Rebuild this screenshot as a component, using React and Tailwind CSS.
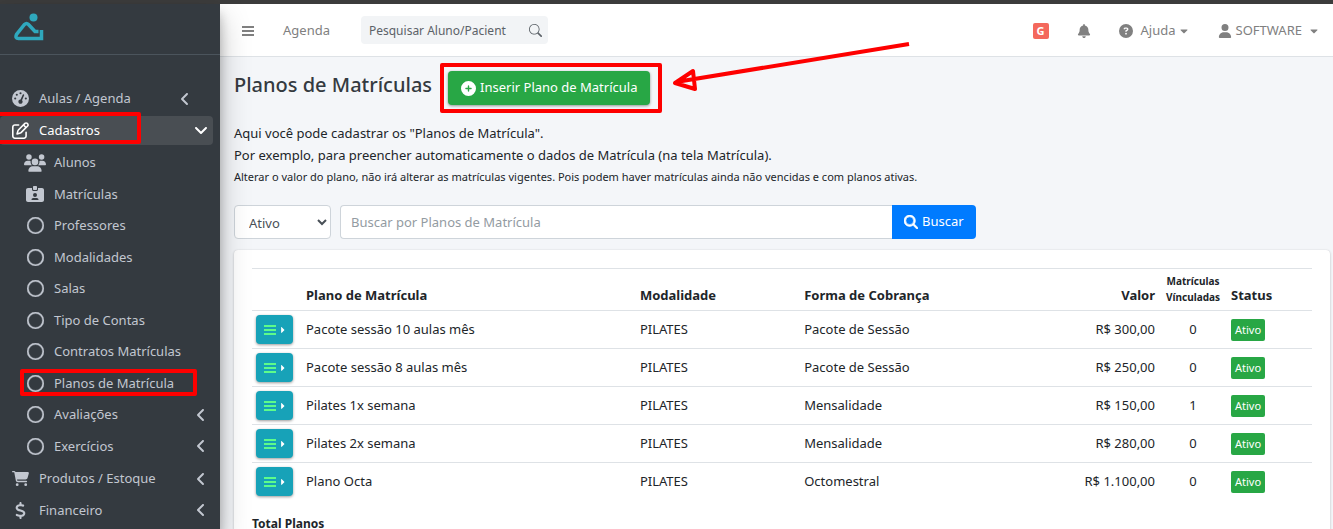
import { FaAngleDown, FaAngleLeft, FaCartShopping, FaDollarSign, FaGaugeHigh, FaIdCardClip, FaUsers, FaBell, FaUser, FaCircleQuestion, FaCirclePlus, FaMagnifyingGlass, FaRegCircle, FaRegPenToSquare } from 'react-icons/fa6';
import { FaCaretDown, FaCaretRight } from 'react-icons/fa';
import { BsSearch } from 'react-icons/bs';

const plans = [
  { name: 'Pacote sessão 10 aulas mês', type: 'PILATES', billing: 'Pacote de Sessão', price: 'R$ 300,00', enrolled: 0 },
  { name: 'Pacote sessão 8 aulas mês', type: 'PILATES', billing: 'Pacote de Sessão', price: 'R$ 250,00', enrolled: 0 },
  { name: 'Pilates 1x semana', type: 'PILATES', billing: 'Mensalidade', price: 'R$ 150,00', enrolled: 1 },
  { name: 'Pilates 2x semana', type: 'PILATES', billing: 'Mensalidade', price: 'R$ 280,00', enrolled: 0 },
  { name: 'Plano Octa', type: 'PILATES', billing: 'Octomestral', price: 'R$ 1.100,00', enrolled: 0 },
];

const children = [
  { label: 'Alunos', icon: FaUsers },
  { label: 'Matrículas', icon: FaIdCardClip },
  { label: 'Professores' },
  { label: 'Modalidades' },
  { label: 'Salas' },
  { label: 'Tipo de Contas' },
  { label: 'Contratos Matrículas' },
  { label: 'Planos de Matrícula', marked: true },
  { label: 'Avaliações', more: true },
  { label: 'Exercícios', more: true },
];

function Logo() {
  return (
    <svg viewBox="0 0 30 28" className="w-[30px] h-7" fill="none" aria-hidden="true">
      <circle cx="19.5" cy="4.500" r="4" fill="#2fa8bd" />
      <path d="M24.500 18.500 H21 L14.500 11.500 Q12.500 9.500 10.500 11.500 L2.500 21.500 Q0.800 25.500 4.500 25.500 H27.500 V17" stroke="#2fa8bd" strokeWidth="3.500" />
    </svg>
  );
}

function Bars({ className }) {
  return (
    <svg viewBox="0 0 12 12" className={className} fill="currentColor" aria-hidden="true">
      <path d="M0 1h12v2H0zM0 5h12v2H0zM0 9h12v2H0z" />
    </svg>
  );
}

function Mark({ className }) {
  return <span className={`absolute border-4 border-[#fe0000] rounded-xs pointer-events-none ${className}`} />;
}

function NavItem({ label, icon: Icon, more, open, near, marked }) {
  return (
    <li>
      <a href="#" className={`relative flex items-center rounded pl-2 pr-1 py-[5px] mb-0.5 ${open ? 'bg-[#494e53] text-white' : ''}`}>
        <span className="w-6 flex justify-center mr-[7px]">
          <Icon className="size-[17px]" />
        </span>
        {label}
        {more && <FaAngleLeft className={`size-4 ml-auto ${near ? 'mr-4' : ''}`} />}
        {open && <FaAngleDown className="size-4 ml-auto" />}
        {marked && <Mark className="-left-1 right-[72px] -top-1 bottom-px" />}
      </a>
    </li>
  );
}

function SubItem({ label, icon: Icon = FaRegCircle, more, marked }) {
  return (
    <li>
      <a href="#" className="relative flex items-center pl-2 pr-1 py-[5px] mb-0.5">
        <span className="w-6 flex justify-center ml-[15px] mr-[7px]">
          <Icon className={Icon === FaUsers ? 'w-[22px] h-[18px]' : Icon === FaRegCircle ? 'size-[17px] stroke-[10]' : 'size-[18px]'} />
        </span>
        {label}
        {more && <FaAngleLeft className="size-4 ml-auto" />}
        {marked && <Mark className="left-5 right-4 top-0 bottom-0.5" />}
      </a>
    </li>
  );
}

function Sidebar() {
  return (
    <aside className="relative z-10 w-[220px] shrink-0 bg-[#343a40] text-[13px] leading-normal text-[#c2c7d0] shadow-[0_14px_28px_rgba(0,0,0,0.25),0_10px_10px_rgba(0,0,0,0.22)]">
      <a href="#" aria-label="Início" className="flex items-center h-[51px] pl-[14px] pb-1 border-b border-[#4b545c]">
        <Logo />
      </a>
      <nav className="mt-[29px] pr-[7px]">
        <ul>
          <NavItem label="Aulas / Agenda" icon={FaGaugeHigh} more near />
          <NavItem label="Cadastros" icon={FaRegPenToSquare} open marked />
          <li>
            <ul className="py-px">
              {children.map((c) => <SubItem key={c.label} {...c} />)}
            </ul>
          </li>
          <NavItem label="Produtos / Estoque" icon={FaCartShopping} more />
          <NavItem label="Financeiro" icon={FaDollarSign} more />
        </ul>
      </nav>
    </aside>
  );
}

function Topbar() {
  return (
    <header className="flex items-center h-[53px] shrink-0 bg-white border-b border-[#dee2e6] pl-[22px] pr-[13px] pt-0.5 text-[13px] text-[#808080]">
      <button type="button" aria-label="Menu"><Bars className="size-3" /></button>
      <a href="#" className="ml-[29px]">Agenda</a>
      <form className="ml-[31px] mb-0.5 flex items-center w-[187px] h-7 rounded bg-[#f2f4f6] text-[#5c6268]">
        <input aria-label="Pesquisar Aluno/Paciente" placeholder="Pesquisar Aluno/Pacient" className="min-w-0 flex-1 pl-2 pt-0.5 text-xs outline-none placeholder:text-[#5c6268]" />
        <button type="button" aria-label="Pesquisar" className="px-1.5"><BsSearch className="size-[13px]" /></button>
      </form>
      <div className="ml-auto flex items-center">
        <a href="#" aria-label="G" className="flex items-center justify-center size-4 rounded-xs bg-[#f4685c] text-white text-[11px] font-bold">G</a>
        <a href="#" aria-label="Notificações" className="ml-7"><FaBell className="size-3.5" /></a>
        <a href="#" className="ml-7 flex items-center">
          <FaCircleQuestion className="size-3.5 mr-2" />Ajuda<FaCaretDown className="size-3 ml-0.5" />
        </a>
        <a href="#" className="ml-7 flex items-center">
          <FaUser className="size-3.5 mr-1" />SOFTWARE<FaCaretDown className="size-3 ml-1.5" />
        </a>
      </div>
    </header>
  );
}

function PlansTable() {
  return (
    <table className="w-full table-fixed text-[13px] text-[#212529]">
      <colgroup>
        <col className="w-[50px]" />
        <col className="w-[31.5%]" />
        <col className="w-[15.5%]" />
        <col />
        <col className="w-[12%]" />
        <col className="w-[68px]" />
        <col className="w-[85px]" />
      </colgroup>
      <thead>
        <tr className="h-[42px] border-y border-[#dee2e6] text-left align-bottom [&>th]:px-1 [&>th]:pb-[5px]">
          <th aria-label="Ações" />
          <th>Plano de Matrícula</th>
          <th>Modalidade</th>
          <th>Forma de Cobrança</th>
          <th className="text-right">Valor</th>
          <th className="text-center text-[10px] leading-4">Matrículas Vínculadas</th>
          <th>Status</th>
        </tr>
      </thead>
      <tbody>
        {plans.map((p) => (
          <tr key={p.name} className="border-b border-[#dee2e6] last:border-b-0 [&>td]:px-1 [&>td]:py-1">
            <td>
              <button type="button" aria-label="Opções" className="flex items-center justify-center gap-0.5 w-[37px] h-[29px] pl-0.5 rounded-sm bg-[#17a2b8] shadow-[0_1px_3px_rgba(0,0,0,0.4)]">
                <Bars className="size-3 text-[#5dfc8a]" />
                <FaCaretRight className="size-2.5 text-white" />
              </button>
            </td>
            <td>{p.name}</td>
            <td>{p.type}</td>
            <td>{p.billing}</td>
            <td className="text-right">{p.price}</td>
            <td className="text-center">{p.enrolled}</td>
            <td><span className="inline-block align-middle rounded-xs bg-[#28a745] text-white text-[11px] leading-[22px] px-1">Ativo</span></td>
          </tr>
        ))}
      </tbody>
    </table>
  );
}

function Arrow() {
  return (
    <svg viewBox="0 0 244 56" className="absolute left-full -top-8 ml-5 w-[244px] h-14 pointer-events-none" fill="none" stroke="#fe0000" strokeWidth="4" strokeLinejoin="round" aria-hidden="true">
      <path d="M239 5 L6 43 M5 44 L23 32 L25 50 Z" />
    </svg>
  );
}

export default function App() {
  return (
    <div className="h-screen overflow-hidden flex flex-col bg-[#f4f6f9] font-['Noto_Sans','Open_Sans',sans-serif]">
      <div className="h-1 shrink-0 bg-[#3c3c3c]" />
      <div className="flex flex-1 min-h-0">
        <Sidebar />
        <div className="flex-1 min-w-0 flex flex-col">
          <Topbar />
          <main className="flex-1 min-h-0 pl-[14px] pr-[3px] text-[#212529]">
            <div className="flex items-start">
              <h1 className="mt-3 text-xl leading-8 font-medium text-[#343a40]">Planos de Matrículas</h1>
              <div className="relative ml-4 mt-3.5">
                <button type="button" className="flex items-center h-[34px] px-[13px] rounded bg-[#28a745] text-white text-[13px] shadow-[0_1px_3px_rgba(0,0,0,0.4)]">
                  <FaCirclePlus className="size-[15px] mr-1" />Inserir Plano de Matrícula
                </button>
                <Mark className="-left-2 -right-3 -top-2 -bottom-2" />
                <Arrow />
              </div>
            </div>
            <div className="mt-[17px] text-[13px] leading-[22px]">
              <p>Aqui você pode cadastrar os "Planos de Matrícula".</p>
              <p>Por exemplo, para preencher automaticamente o dados de Matrícula (na tela Matrícula).</p>
              <p className="text-[11px]">Alterar o valor do plano, não irá alterar as matrículas vigentes. Pois podem haver matrículas ainda não vencidas e com planos ativas.</p>
            </div>
            <form className="flex mt-[17px] h-[34px] text-[13px] text-[#495057]">
              <select aria-label="Situação" className="w-[97px] mr-[9px] px-2.5 pt-0.5 rounded-sm border border-[#ced4da] bg-white">
                <option>Ativo</option>
              </select>
              <input aria-label="Buscar por Planos de Matrícula" placeholder="Buscar por Planos de Matrícula" className="w-[552px] px-2.5 pt-0.5 rounded-l-sm border border-r-0 border-[#ced4da] bg-white placeholder:text-[#939ba2]" />
              <button type="button" className="flex items-center px-3 rounded-r-sm bg-[#007bff] text-white">
                <FaMagnifyingGlass className="size-3.5 mr-1 stroke-[24]" />Buscar
              </button>
            </form>
            <section className="mt-[11px] rounded bg-white px-[18px] pt-[18px] pb-10 shadow-[0_0_1px_rgba(0,0,0,0.13),0_1px_3px_rgba(0,0,0,0.2)]">
              <PlansTable />
              <p className="mt-4 text-xs font-bold">Total Planos</p>
            </section>
          </main>
        </div>
      </div>
    </div>
  );
}
